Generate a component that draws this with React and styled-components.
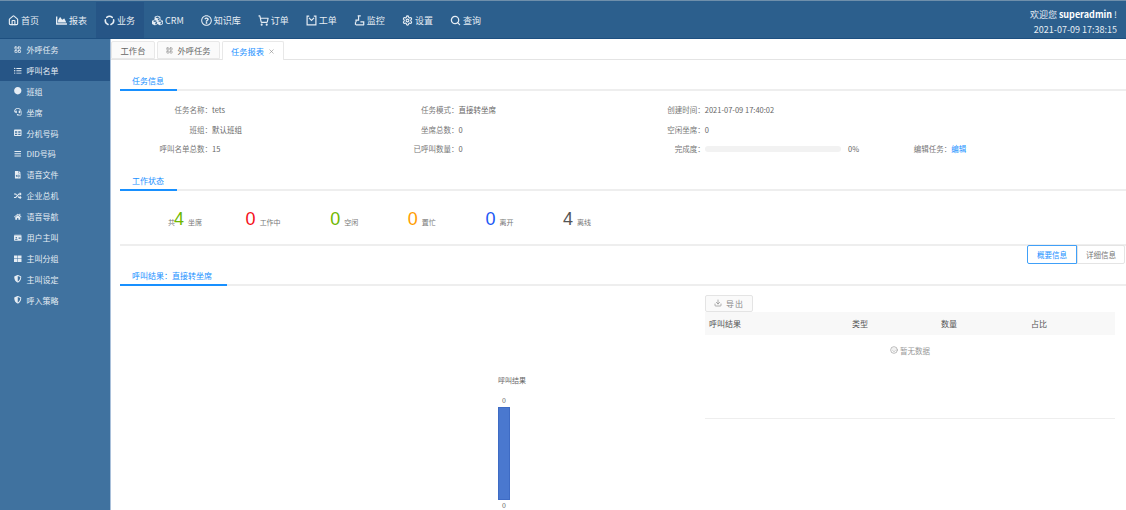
import React from 'react';
import styled, { createGlobalStyle } from 'styled-components';
import {
  FaChartArea, FaCubes, FaRegQuestionCircle, FaHeadset, FaTable, FaFileAudio, FaRandom,
  FaIdCard, FaThLarge, FaListUl, FaCircle, FaBars, FaShieldAlt, FaHome,
} from 'react-icons/fa';
import { Home, Settings, LayoutGrid, Download, Smile, X, ShoppingCart, Search } from 'lucide-react';

// Colors:
// header blue: #2c5f8d | side blue: #40729f | active: #265586 | accent: #1890ff

const GlobalStyle = createGlobalStyle`
  html, body { margin: 0; padding: 0; height: 100%; overflow: hidden; background: #fff; }
  body { font-family: "Noto Sans CJK SC", "Noto Sans", sans-serif; color: #666; }
  * { box-sizing: border-box; }
`;

const Page = styled.div`
  display: flex;
  flex-direction: column;
  height: 100vh;
`;

const Header = styled.header`
  display: flex;
  align-items: stretch;
  justify-content: space-between;
  flex: none;
  height: 39px;
  padding-top: 1px;
  background: #2c5f8d;
  border-top: 1px solid #6f8fab;
  border-bottom: 1px solid #1d4f80;
`;

const TopNav = styled.nav`
  display: flex;
`;

const TopItem = styled.a`
  display: flex;
  align-items: center;
  gap: 2px;
  height: 100%;
  padding: 0 9px 0 8px;
  font-size: 9px;
  color: #e6edf4;
  background: ${(p) => (p.$active ? '#265586' : 'transparent')};
  svg { width: 11px; height: 11px; flex: none; }
`;

const Welcome = styled.div`
  display: flex;
  flex-direction: column;
  align-items: flex-end;
  justify-content: center;
  gap: 3px;
  padding: 5px 9px 0 0;
  font-size: 9px;
  line-height: 12px;
  color: #e6edf4;
  b { color: #fff; }
`;

const Body = styled.div`
  display: flex;
  flex: 1;
  min-height: 0;
`;

const Side = styled.aside`
  flex: none;
  width: 111px;
  background: #40729f;
  border-right: 1px solid #a9c0da;
`;

const SideItem = styled.a`
  display: flex;
  align-items: center;
  gap: 5px;
  height: 20.9px;
  padding-left: 14px;
  font-size: 8px;
  color: #e6edf4;
  background: ${(p) => (p.$active ? '#265586' : 'transparent')};
  svg { width: 7.5px; height: 7.5px; flex: none; }
`;

const Main = styled.main`
  flex: 1;
  min-width: 0;
  display: flex;
  flex-direction: column;
`;

const TabBar = styled.div`
  display: flex;
  flex: none;
  gap: 2px;
  height: 21px;
  padding-top: 2px;
  border-bottom: 1px solid #e4e4e4;
`;

const Tab = styled.div`
  display: flex;
  align-items: center;
  justify-content: center;
  gap: 4px;
  width: ${(p) => p.$w}px;
  height: ${(p) => (p.$active ? 19 : 18)}px;
  font-size: 8.3px;
  color: ${(p) => (p.$active ? '#1890ff' : '#666')};
  background: ${(p) => (p.$active ? '#fff' : '#fafafa')};
  border: 1px solid #e8e8e8;
  border-bottom: ${(p) => (p.$active ? 'none' : '1px solid #e8e8e8')};
  border-radius: 2px 2px 0 0;
  svg { width: 7px; height: 7px; color: #888; }
`;

const Content = styled.div`
  flex: 1;
  min-height: 0;
  padding-left: 9px;
  overflow: hidden;
`;

const SectionTitle = styled.div`
  display: flex;
  height: ${(p) => p.$h}px;
  margin-top: ${(p) => p.$top || 0}px;
  border-bottom: 2px solid #eee;
`;

const SectionLabel = styled.div`
  display: flex;
  align-items: flex-end;
  height: calc(100% + 2px);
  width: ${(p) => p.$w}px;
  padding: 0 0 3px 12px;
  font-size: 8px;
  line-height: 11px;
  color: #1890ff;
  border-bottom: 2px solid #1890ff;
`;

const InfoGrid = styled.div`
  display: grid;
  grid-template-columns: repeat(4, 246.4px);
  grid-auto-rows: 19.5px;
  align-items: center;
  padding-top: 9px;
`;

const Field = styled.div`
  display: flex;
  align-items: center;
  font-size: 7.5px;
`;

const FieldLabel = styled.span`
  flex: none;
  width: 92px;
  text-align: right;
  color: #777;
`;

const FieldValue = styled.span`
  color: ${(p) => (p.$link ? '#1890ff' : '#666')};
`;

const Progress = styled.div`
  width: 137px;
  height: 6px;
  border-radius: 3px;
  background: #f2f2f2;
  margin: 0 7px 0 0;
`;

const StatRow = styled.div`
  display: flex;
  align-items: baseline;
  gap: 49.6px;
  height: 53px;
  padding: 17px 0 0 48px;
`;

const Stat = styled.div`
  display: flex;
  align-items: baseline;
  margin-right: ${(p) => (p.$total ? -6 : 0)}px;
  font-size: 7px;
  color: #777;
`;

const Total = styled.span`
  margin-right: -1px;
`;

const Digit = styled.span`
  font-family: "Liberation Sans", sans-serif;
  font-size: 18px;
  line-height: 22px;
  margin-right: 4px;
  color: ${(p) => p.$color};
`;

const Divider = styled.div`
  height: 2px;
  background: #eee;
`;

const Switcher = styled.div`
  display: flex;
  justify-content: flex-end;
  padding-right: 1px;
  margin-top: -1px;
`;

const SwitchButton = styled.div`
  display: flex;
  align-items: center;
  justify-content: center;
  width: ${(p) => p.$w}px;
  height: 19px;
  font-size: 7.5px;
  color: ${(p) => (p.$active ? '#1890ff' : '#777')};
  border: 1px solid ${(p) => (p.$active ? '#40a0f8' : '#e4e4e4')};
  border-radius: ${(p) => (p.$active ? '2px 0 0 2px' : '0 2px 2px 0')};
`;

const ResultRow = styled.div`
  display: flex;
`;

const ChartPane = styled.div`
  flex: none;
  width: 585px;
  svg { display: block; }
  text { font-family: "Noto Sans CJK SC", sans-serif; font-size: 7px; fill: #666; }
`;

const TablePane = styled.div`
  flex: none;
  width: 410px;
  padding-top: 9px;
`;

const ExportButton = styled.div`
  display: flex;
  align-items: center;
  justify-content: center;
  gap: 4px;
  width: 48px;
  height: 17px;
  font-size: 8px;
  letter-spacing: 1px;
  color: #888;
  background: #fafafa;
  border: 1px solid #e4e4e4;
  border-radius: 2px;
  svg { width: 8px; height: 8px; }
`;

const TableHead = styled.div`
  display: grid;
  grid-template-columns: 143px 89px 90px 1fr;
  align-items: center;
  height: 23px;
  padding-left: 4px;
  font-size: 8px;
  color: #555;
  background: #f8f8f8;
`;

const EmptyRow = styled.div`
  display: flex;
  align-items: center;
  justify-content: center;
  gap: 2px;
  height: 84px;
  padding: 0 0 52px 0;
  font-size: 7.5px;
  color: #999;
  border-bottom: 1px solid #eee;
  svg { width: 8px; height: 8px; }
`;

// 业务: three arcs round a ring
const RingIcon = () => (
  <svg viewBox="0 0 12 12" fill="none" stroke="currentColor" strokeWidth="1.7" strokeLinecap="round">
    <path d="M3 2.6A4.6 4.6 0 0 1 9 2.6" />
    <path d="M10.5 5.2A4.6 4.6 0 0 1 7.6 10.3" />
    <path d="M4.4 10.3A4.6 4.6 0 0 1 1.5 5.2" />
  </svg>
);

// 工单: tray with a notch at the top
const TrayIcon = () => (
  <svg viewBox="0 0 12 12" fill="none" stroke="currentColor" strokeWidth="1.3">
    <path d="M3.5 1.2H1.2v9.6h9.6V1.2H8.5" />
    <path d="M3.2 3.2 6 6l2.8-2.8" />
  </svg>
);

// 监控: stand with a wide foot
const StandIcon = () => (
  <svg viewBox="0 0 12 12" fill="none" stroke="currentColor" strokeWidth="1.3">
    <path d="M4 1h3.4M5 1v4.6H2.2v2.2M2 10.8h9M7 7.6h3.6v3.2" />
    <path d="M1.6 7.8v3" />
  </svg>
);

const topItems = [
  { label: '首页', icon: <Home strokeWidth={2.5} /> },
  { label: '报表', icon: <FaChartArea /> },
  { label: '业务', icon: <RingIcon />, active: true },
  { label: 'CRM', icon: <FaCubes /> },
  { label: '知识库', icon: <FaRegQuestionCircle /> },
  { label: '订单', icon: <ShoppingCart strokeWidth={2.5} /> },
  { label: '工单', icon: <TrayIcon /> },
  { label: '监控', icon: <StandIcon /> },
  { label: '设置', icon: <Settings strokeWidth={2.5} /> },
  { label: '查询', icon: <Search strokeWidth={2.8} /> },
];

const sideItems = [
  { label: '外呼任务', icon: <LayoutGrid strokeWidth={2.6} /> },
  { label: '呼叫名单', icon: <FaListUl />, active: true },
  { label: '班组', icon: <FaCircle /> },
  { label: '坐席', icon: <FaHeadset /> },
  { label: '分机号码', icon: <FaTable /> },
  { label: 'DID号码', icon: <FaBars /> },
  { label: '语音文件', icon: <FaFileAudio /> },
  { label: '企业总机', icon: <FaRandom /> },
  { label: '语音导航', icon: <FaHome /> },
  { label: '用户主叫', icon: <FaIdCard /> },
  { label: '主叫分组', icon: <FaThLarge /> },
  { label: '主叫设定', icon: <FaShieldAlt /> },
  { label: '呼入策略', icon: <FaShieldAlt /> },
];

const stats = [
  { n: 4, color: '#6fb800', label: '坐席', total: true },
  { n: 0, color: '#f5101a', label: '工作中' },
  { n: 0, color: '#6fb800', label: '空闲' },
  { n: 0, color: '#ff9d00', label: '置忙' },
  { n: 0, color: '#2058f5', label: '离开' },
  { n: 4, color: '#555', label: '离线' },
];

export default function App() {
  return (
    <Page>
      <GlobalStyle />
      <Header>
        <TopNav>
          {topItems.map((it) => (
            <TopItem key={it.label} $active={it.active}>
              {it.icon}
              {it.label}
            </TopItem>
          ))}
        </TopNav>
        <Welcome>
          <div>欢迎您 <b>superadmin</b> !</div>
          <div>2021-07-09 17:38:15</div>
        </Welcome>
      </Header>
      <Body>
        <Side>
          {sideItems.map((it) => (
            <SideItem key={it.label} $active={it.active}>
              {it.icon}
              {it.label}
            </SideItem>
          ))}
        </Side>
        <Main>
          <TabBar>
            <Tab $w={44}>工作台</Tab>
            <Tab $w={63}><LayoutGrid />外呼任务</Tab>
            <Tab $w={62} $active>任务报表<X /></Tab>
          </TabBar>
          <Content>
            <SectionTitle $h={29} $top={2}>
              <SectionLabel $w={57}>任务信息</SectionLabel>
            </SectionTitle>
            <InfoGrid>
              <Field><FieldLabel>任务名称：</FieldLabel><FieldValue>tets</FieldValue></Field>
              <Field><FieldLabel>任务模式：</FieldLabel><FieldValue>直接转坐席</FieldValue></Field>
              <Field><FieldLabel>创建时间：</FieldLabel><FieldValue>2021-07-09 17:40:02</FieldValue></Field>
              <span />
              <Field><FieldLabel>班组：</FieldLabel><FieldValue>默认班组</FieldValue></Field>
              <Field><FieldLabel>坐席总数：</FieldLabel><FieldValue>0</FieldValue></Field>
              <Field><FieldLabel>空闲坐席：</FieldLabel><FieldValue>0</FieldValue></Field>
              <span />
              <Field><FieldLabel>呼叫名单总数：</FieldLabel><FieldValue>15</FieldValue></Field>
              <Field><FieldLabel>已呼叫数量：</FieldLabel><FieldValue>0</FieldValue></Field>
              <Field>
                <FieldLabel>完成度：</FieldLabel>
                <Progress />
                <FieldValue>0%</FieldValue>
              </Field>
              <Field><FieldLabel>编辑任务：</FieldLabel><FieldValue $link>编辑</FieldValue></Field>
            </InfoGrid>
            <SectionTitle $h={22} $top={10}>
              <SectionLabel $w={57}>工作状态</SectionLabel>
            </SectionTitle>
            <StatRow>
              {stats.map((s) => (
                <Stat key={s.label} $total={s.total}>
                  {s.total && <Total>共</Total>}
                  <Digit $color={s.color}>{s.n}</Digit>
                  {s.label}
                </Stat>
              ))}
            </StatRow>
            <Divider />
            <Switcher>
              <SwitchButton $w={50} $active>概要信息</SwitchButton>
              <SwitchButton $w={48}>详细信息</SwitchButton>
            </Switcher>
            <SectionTitle $h={22}>
              <SectionLabel $w={107}>呼叫结果：直接转坐席</SectionLabel>
            </SectionTitle>
            <ResultRow>
              <ChartPane>
                <svg width="585" height="224" viewBox="0 0 585 224">
                  <text x="392" y="97" textAnchor="middle">呼叫结果</text>
                  <text x="384" y="117" textAnchor="middle">0</text>
                  <rect x="378.5" y="121.5" width="11" height="92" fill="#4a78cf" stroke="#3e6bc4" />
                  <text x="384" y="222" textAnchor="middle">0</text>
                </svg>
              </ChartPane>
              <TablePane>
                <ExportButton><Download />导出</ExportButton>
                <TableHead>
                  <span>呼叫结果</span>
                  <span>类型</span>
                  <span>数量</span>
                  <span>占比</span>
                </TableHead>
                <EmptyRow><Smile />暂无数据</EmptyRow>
              </TablePane>
            </ResultRow>
          </Content>
        </Main>
      </Body>
    </Page>
  );
}
